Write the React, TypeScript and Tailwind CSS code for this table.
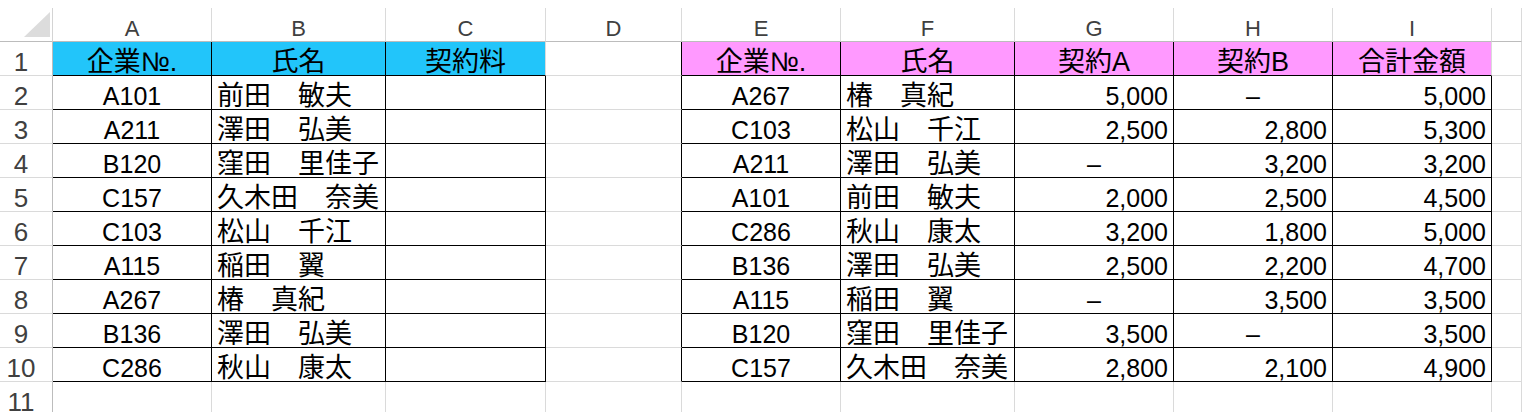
import React from "react";

const GRID =
  "grid grid-cols-[53px_159px_174px_160px_136px_159px_174px_159px_159px_159px_30px]";

const LETTERS = ["", "A", "B", "C", "D", "E", "F", "G", "H", "I", ""];

const left: string[][] = [
  ["企業№.", "氏名", "契約料"],
  ["A101", "前田　敏夫", ""],
  ["A211", "澤田　弘美", ""],
  ["B120", "窪田　里佳子", ""],
  ["C157", "久木田　奈美", ""],
  ["C103", "松山　千江", ""],
  ["A115", "稲田　翼", ""],
  ["A267", "椿　真紀", ""],
  ["B136", "澤田　弘美", ""],
  ["C286", "秋山　康太", ""],
];

const right: string[][] = [
  ["企業№.", "氏名", "契約A", "契約B", "合計金額"],
  ["A267", "椿　真紀", "5,000", "–", "5,000"],
  ["C103", "松山　千江", "2,500", "2,800", "5,300"],
  ["A211", "澤田　弘美", "–", "3,200", "3,200"],
  ["A101", "前田　敏夫", "2,000", "2,500", "4,500"],
  ["C286", "秋山　康太", "3,200", "1,800", "5,000"],
  ["B136", "澤田　弘美", "2,500", "2,200", "4,700"],
  ["A115", "稲田　翼", "–", "3,500", "3,500"],
  ["B120", "窪田　里佳子", "3,500", "–", "3,500"],
  ["C157", "久木田　奈美", "2,800", "2,100", "4,900"],
];

function inLeft(r: number, c: number) {
  return r >= 1 && r <= 10 && c >= 1 && c <= 3;
}
function inRight(r: number, c: number) {
  return r >= 1 && r <= 10 && c >= 5 && c <= 9;
}

function textOf(r: number, c: number): string {
  if (inLeft(r, c)) return left[r - 1][c - 1];
  if (inRight(r, c)) return right[r - 1][c - 5];
  return "";
}

const isCJK = (s: string) => /[\u3000-\u9fff]/.test(s);

function DataCell({ r, c }: { r: number; c: number }) {
  const t = textOf(r, c);
  const table = inLeft(r, c) || inRight(r, c);
  let rb = "border-r-[#dadada]";
  let bb = "border-b-[#dadada]";
  if (table) {
    bb = "border-b-black";
    rb = r === 1 && (c === 3 || c === 9) ? "border-r-[#dadada]" : "border-r-black";
  } else if (c === 4 && r >= 1 && r <= 10) {
    rb = "border-r-black";
  }
  let bg = "";
  if (r === 1 && inLeft(r, c)) bg = "bg-[#22c5fa]";
  if (r === 1 && inRight(r, c)) bg = "bg-[#ff99ff]";

  let align = "justify-center";
  if (r >= 2 && (c === 2 || c === 6)) align = "justify-start pl-[5px]";
  if (r >= 2 && c >= 7 && c <= 9 && t !== "–") align = "justify-end pr-[5px]";

  const size = isCJK(t) ? "text-[27px]" : "text-[25px]";
  return (
    <div
      className={`h-[34px] border-r border-b ${rb} ${bb} ${bg} flex items-end ${align} overflow-hidden whitespace-nowrap`}
    >
      <span className={`${size} leading-[25px] text-black`}>{t}</span>
    </div>
  );
}

export default function App() {
  const rows = Array.from({ length: 11 }, (_, i) => i + 1);
  return (
    <div className="w-[1522px] h-[412px] overflow-hidden bg-white font-['Liberation_Sans','Noto_Sans_CJK_JP',sans-serif]">
      <div className="h-[8px]" />
      <div className={GRID}>
        {/* column header row */}
        <div className="h-[34px] border-r border-b border-r-[#d4d4d4] border-b-[#bcbcbc] flex justify-end items-end pr-[2px] pb-[4px]">
          <svg width="26" height="25" viewBox="0 0 26 25">
            <polygon points="26,0 26,25 0,25" fill="#dcdcdc" />
          </svg>
        </div>
        {LETTERS.slice(1).map((l, i) => (
          <div
            key={"h" + i}
            className="h-[34px] border-r border-b border-r-[#dadada] border-b-[#bcbcbc] flex items-end justify-center pb-[1px]"
          >
            <span className="text-[22px] leading-[22px] text-[#404040]">{l}</span>
          </div>
        ))}
        {rows.map((r) => (
          <React.Fragment key={r}>
            <div className="h-[34px] border-r border-b border-r-[#bcbcbc] border-b-[#dadada] flex items-end justify-center pr-[10px]">
              <span className="text-[26px] leading-[26px] text-[#404040]">{r}</span>
            </div>
            {Array.from({ length: 10 }, (_, k) => k + 1).map((c) => (
              <DataCell key={c} r={r} c={c} />
            ))}
          </React.Fragment>
        ))}
      </div>
    </div>
  );
}
